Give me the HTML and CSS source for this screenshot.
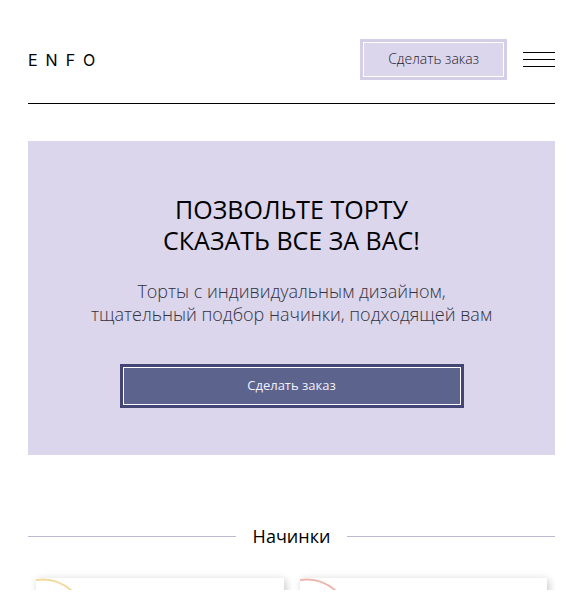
FILE: index.html
```html
<!DOCTYPE html>
<html lang="ru">
<head>
<meta charset="utf-8">
<meta name="viewport" content="width=device-width, initial-scale=1">
<title>ENFO</title>
<link rel="stylesheet" href="styles.css">
</head>
<body>
<div class="page">
  <header class="header">
    <a class="logo" href="#">ENFO</a>
    <div class="header-actions">
      <button class="button button-light" type="button"><span class="button-frame">Сделать заказ</span></button>
      <button class="menu" type="button" aria-label="Меню">
        <span class="menu-line"></span>
        <span class="menu-line"></span>
        <span class="menu-line"></span>
      </button>
    </div>
  </header>
  <main>
    <section class="hero">
      <h1 class="hero-title">ПОЗВОЛЬТЕ ТОРТУ<br>СКАЗАТЬ ВСЕ ЗА ВАС!</h1>
      <p class="hero-text">Торты с индивидуальным дизайном,<br>тщательный подбор начинки, подходящей вам</p>
      <button class="button button-dark" type="button"><span class="button-frame">Сделать заказ</span></button>
    </section>
    <section class="fillings">
      <h2 class="section-title">Начинки</h2>
      <div class="cards">
        <article class="card">
          <svg class="card-arc card-arc-yellow" viewBox="0 0 48 12" aria-hidden="true"><path d="M0 2C15 0 26 4 36 13"/></svg>
        </article>
        <article class="card">
          <svg class="card-arc card-arc-pink" viewBox="0 0 48 12" aria-hidden="true"><path d="M0 2C15 0 26 4 36 13"/></svg>
        </article>
      </div>
    </section>
  </main>
</div>
</body>
</html>
```
FILE: styles.css
```css
* {
  box-sizing: border-box;
}

body {
  margin: 0;
  background: #fff;
  color: #000;
  font-family: "Open Sans", "Noto Sans", sans-serif;
}

.page {
  padding: 39px 23px 12px 28px;
}

.header {
  display: flex;
  align-items: center;
  justify-content: space-between;
  padding-bottom: 23px;
  border-bottom: 1px solid #000;
}

.logo {
  color: #000;
  font-family: Inter, sans-serif;
  font-size: 16px;
  letter-spacing: 8px;
  text-decoration: none;
}

.header-actions {
  display: flex;
  align-items: center;
  gap: 16px;
}

.button {
  display: block;
  padding: 3px;
  border: 0;
  font-family: inherit;
  font-size: 13px;
  line-height: 18px;
  cursor: pointer;
}

.button-frame {
  display: block;
  border: 1px solid #fff;
}

.button-light {
  background: #d4cee6;
  color: #25222e;
  font-size: 14px;
  font-weight: 300;
}

.button-light .button-frame {
  padding: 7px 24px 8px;
  background: #dbd6ec;
}

.button-dark {
  width: 100%;
  max-width: 344px;
  margin: 0 auto;
  background: #434574;
  color: #f3f1fb;
}

.button-dark .button-frame {
  padding: 8px 24px 10px;
  background: #5c638d;
}

.menu {
  display: flex;
  flex-direction: column;
  gap: 6px;
  width: 32px;
  padding: 0;
  border: 0;
  background: none;
  cursor: pointer;
}

.menu-line {
  height: 1px;
  background: #000;
}

.hero {
  margin-top: 37px;
  padding: 53px 24px 47px;
  background: #dbd6ec;
  text-align: center;
}

.hero-title {
  margin: 0 0 24px;
  font-size: 25px;
  font-weight: 400;
  line-height: 31px;
}

.hero-text {
  margin: 0 0 38px;
  color: #34313e;
  font-size: 18px;
  font-weight: 300;
  line-height: 23px;
}

.section-title {
  display: flex;
  align-items: center;
  gap: 17px;
  margin: 69px 0 30px;
  font-size: 18px;
  font-weight: 400;
  line-height: 24px;
}

.section-title::before,
.section-title::after {
  content: "";
  flex: 1;
  height: 1px;
  background: #bcb9d0;
}

.cards {
  display: grid;
  grid-template-columns: 1fr 1fr;
  gap: 16px;
  height: 24px;
  padding: 12px 8px 0;
  margin-top: -12px;
  overflow: hidden;
}

.card {
  height: 320px;
  background: #fff;
  box-shadow: 2px 2px 8px rgba(0, 0, 0, 0.22);
}

.card-arc {
  display: block;
  width: 48px;
  height: 12px;
  fill: none;
  stroke-width: 2;
}

.card-arc-yellow {
  stroke: #f2d99b;
}

.card-arc-pink {
  stroke: #efb5ad;
}
```
